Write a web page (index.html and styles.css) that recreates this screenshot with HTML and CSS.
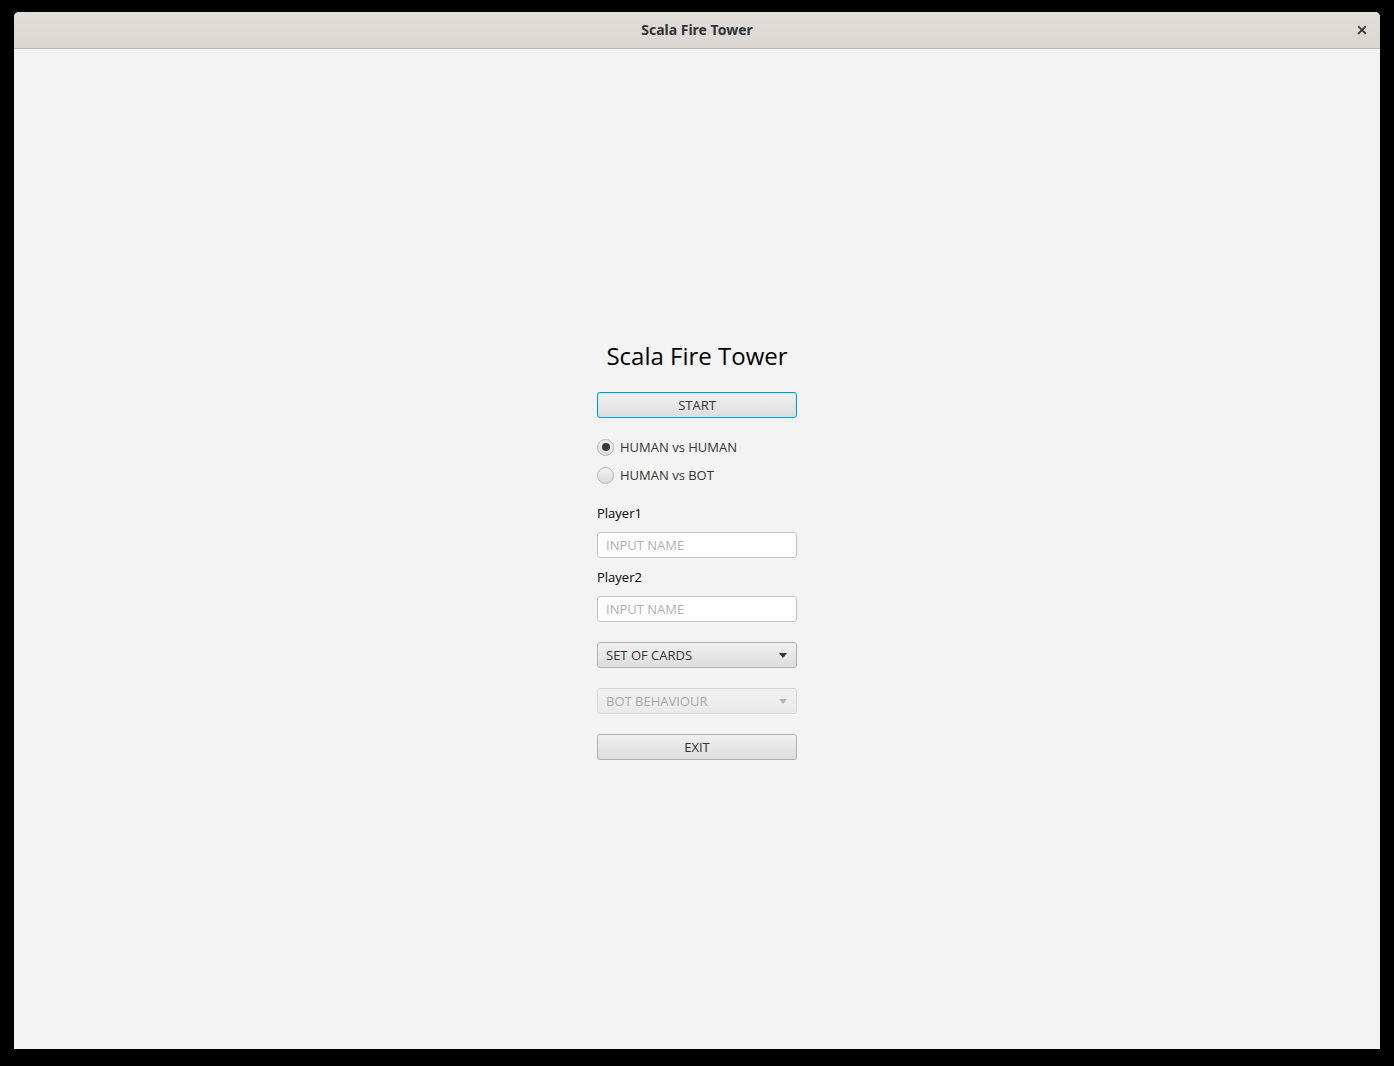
FILE: index.html
```html
<!DOCTYPE html>
<html>
<head>
<meta charset="utf-8">
<link rel="stylesheet" href="styles.css">
</head>
<body>
<div class="window">
  <div class="titlebar">
    <span class="wtitle">Scala Fire Tower</span>
    <span class="close">
      <svg width="10" height="10" viewBox="0 0 10 10"><path d="M1.8 1.8 L8.2 8.2 M8.2 1.8 L1.8 8.2" stroke="#2e3436" stroke-width="1.8" stroke-linecap="square"/></svg>
    </span>
  </div>
  <div class="content">
    <div class="form">
      <div class="heading">Scala Fire Tower</div>
      <div class="btn focused start">START</div>
      <div class="radio r1"><span class="dot sel"></span><span>HUMAN vs HUMAN</span></div>
      <div class="radio r2"><span class="dot"></span><span>HUMAN vs BOT</span></div>
      <div class="label l1">Player1</div>
      <div class="field f1">INPUT NAME</div>
      <div class="label l2">Player2</div>
      <div class="field f2">INPUT NAME</div>
      <div class="combo c1"><span>SET OF CARDS</span><span class="arrow"></span></div>
      <div class="combo c2 disabled"><span>BOT BEHAVIOUR</span><span class="arrow"></span></div>
      <div class="btn exit">EXIT</div>
    </div>
  </div>
</div>
</body>
</html>
```
FILE: styles.css
```css
html, body {
  margin: 0;
  padding: 0;
  background: #000;
  height: 1066px;
  overflow: hidden;
}
.window {
  margin: 12px 0 0 14px;
  width: 1366px;
  height: 1037px;
  display: flex;
  flex-direction: column;
  background: #f3f3f3;
  border-radius: 5px 5px 0 0;
  overflow: hidden;
}
.titlebar {
  height: 36px;
  flex: none;
  box-sizing: content-box;
  background: linear-gradient(#e2dfdb, #dad6d2);
  border-bottom: 1px solid #bdb6af;
  display: flex;
  align-items: center;
  justify-content: center;
  position: relative;
  font-family: "Noto Sans", "Open Sans", sans-serif;
}
.wtitle {
  font-weight: bold;
  font-size: 14px;
  color: #2e3436;
  margin-top: -1px;
}
.close {
  position: absolute;
  right: 13px;
  top: 13px;
  width: 10px;
  height: 10px;
  display: flex;
}
.content {
  flex: 1;
  display: flex;
  align-items: center;
  justify-content: center;
  font-family: "Open Sans", "Noto Sans", sans-serif;
  font-size: 13px;
  color: #333;
}
.form {
  width: 200px;
  display: flex;
  flex-direction: column;
  padding-top: 2px;
}
.heading {
  font-size: 24px;
  color: #000;
  text-align: center;
  height: 34px;
  line-height: 32px;
  white-space: nowrap;
  margin-left: -20px;
  margin-right: -20px;
}
.btn {
  height: 26px;
  box-sizing: border-box;
  border: 1px solid #b1b1b1;
  border-radius: 3px;
  background: linear-gradient(#f0f0f0, #dddddd);
  text-align: center;
  line-height: 24px;
  color: #333;
}
.btn.focused {
  border: 1px solid #039ed3;
  box-shadow: inset 0 0 0 1px #c4e8f6;
}
.start { margin-top: 18px; }
.exit { margin-top: 20px; }
.radio {
  height: 18px;
  display: flex;
  align-items: center;
  gap: 6px;
  line-height: 18px;
}
.r1 { margin-top: 20px; }
.r2 { margin-top: 10px; }
.dot {
  width: 17px;
  height: 17px;
  box-sizing: border-box;
  border-radius: 50%;
  border: 1px solid #b5b5b5;
  background: linear-gradient(#f2f2f2, #dcdcdc);
  display: flex;
  align-items: center;
  justify-content: center;
}
.dot.sel::after {
  content: "";
  width: 8px;
  height: 8px;
  border-radius: 50%;
  background: #3a3a3a;
}
.label {
  height: 16px;
  line-height: 16px;
  color: #000;
}
.l1 { margin-top: 21px; }
.l2 { margin-top: 11px; }
.field {
  margin-top: 11px;
  height: 26px;
  box-sizing: border-box;
  border: 1px solid #c3c3c3;
  border-radius: 3px;
  background: #fff;
  line-height: 24px;
  padding-left: 8px;
  color: #b0b0b0;
}
.combo {
  margin-top: 20px;
  height: 26px;
  box-sizing: border-box;
  border: 1px solid #b1b1b1;
  border-radius: 3px;
  background: linear-gradient(#f0f0f0, #dddddd);
  line-height: 24px;
  padding: 0 9px 0 8px;
  display: flex;
  justify-content: space-between;
  align-items: center;
  color: #333;
}
.arrow {
  width: 0;
  height: 0;
  border-left: 4.5px solid transparent;
  border-right: 4.5px solid transparent;
  border-top: 5px solid #333;
}
.combo.disabled {
  opacity: 0.4;
}
.c2 .arrow { border-top-color: #555; }
```
